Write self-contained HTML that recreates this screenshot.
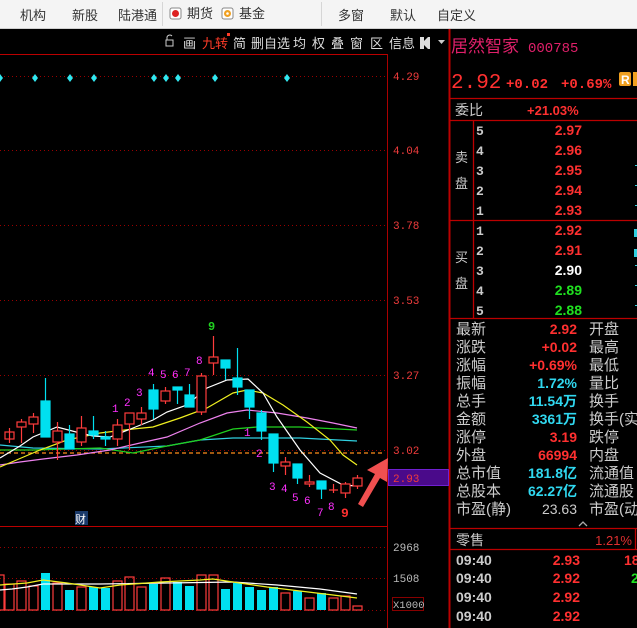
<!DOCTYPE html>
<html><head><meta charset="utf-8"><style>
html,body{margin:0;padding:0;background:#000;width:637px;height:628px;overflow:hidden}
svg{display:block}
text{font-family:"Liberation Sans","Noto Sans CJK SC",sans-serif}
.m{font-family:"Liberation Mono","Noto Sans CJK SC",monospace}
</style></head><body>
<svg width="637" height="628" viewBox="0 0 637 628" xmlns="http://www.w3.org/2000/svg">
<!-- top bar -->
<rect x="0" y="0" width="637" height="28" fill="#f4f4f4"/>
<line x1="0" y1="28.5" x2="637" y2="28.5" stroke="#cfcfcf"/>
<line x1="162.5" y1="2" x2="162.5" y2="26" stroke="#d6d6d6"/>
<line x1="321.5" y1="2" x2="321.5" y2="26" stroke="#d6d6d6"/>
<g font-size="13" fill="#333">
<text x="20" y="20">机构</text><text x="72" y="20">新股</text><text x="118" y="20">陆港通</text>
<text x="187" y="18">期货</text><text x="239" y="18">基金</text>
<text x="338" y="20">多窗</text><text x="390" y="20">默认</text><text x="437" y="20">自定义</text>
</g>
<rect x="170" y="8" width="11" height="11" rx="2" fill="#fff" stroke="#888"/><circle cx="175.5" cy="13.5" r="3.5" fill="#d22"/>
<rect x="222" y="8" width="11" height="11" rx="2" fill="#fff" stroke="#888"/><circle cx="227.5" cy="13.5" r="3.5" fill="#f0a020"/><circle cx="227.5" cy="13.5" r="1.3" fill="#fff"/>

<!-- toolbar -->
<g font-size="13" fill="#ddd">
<rect x="166" y="40" width="7" height="6" fill="none" stroke="#ccc"/><path d="M167 40v-3a3 3 0 0 1 5 -1" fill="none" stroke="#ccc"/>
<text x="183" y="48">画</text>
<text x="202" y="48" fill="#ff3c28">九转</text><rect x="227" y="33" width="3" height="3" fill="#ff3c28"/>
<text x="233" y="48">简</text><text x="251" y="48">删自选</text>
<text x="293" y="48">均</text><text x="312" y="48">权</text><text x="331" y="48">叠</text><text x="350" y="48">窗</text><text x="370" y="48">区</text><text x="389" y="48">信息</text>
<path d="M420 37h4v4l4-4v12l-4-4v4h-4z" fill="#ddd"/><rect x="428" y="37" width="2" height="12" fill="#ddd"/>
<path d="M438 40h7l-3.5 4z" fill="#ccc"/>
</g>
<line x1="0" y1="54.5" x2="387" y2="54.5" stroke="#b00"/>

<!-- frame -->
<line x1="387.5" y1="54" x2="387.5" y2="628" stroke="#a00"/>
<line x1="449.5" y1="29" x2="449.5" y2="628" stroke="#b00" stroke-width="2"/>
<line x1="0" y1="526.5" x2="387" y2="526.5" stroke="#b00"/>

<!-- grid -->
<g stroke="#900" stroke-dasharray="1,3">
<line x1="0" y1="76.5" x2="387" y2="76.5"/><line x1="0" y1="150.5" x2="387" y2="150.5"/><line x1="0" y1="225.5" x2="387" y2="225.5"/><line x1="0" y1="300.5" x2="387" y2="300.5"/><line x1="0" y1="375.5" x2="387" y2="375.5"/><line x1="0" y1="450.5" x2="387" y2="450.5"/>
<line x1="0" y1="547.5" x2="387" y2="547.5"/><line x1="0" y1="578.5" x2="387" y2="578.5"/><line x1="0" y1="610.5" x2="387" y2="610.5"/>
</g>
<g class="m" font-size="11" fill="#f03c3c">
<text x="393" y="80" class="m">4.29</text><text x="393" y="154" class="m">4.04</text><text x="393" y="229" class="m">3.78</text><text x="393" y="304" class="m">3.53</text><text x="393" y="379" class="m">3.27</text><text x="393" y="454" class="m">3.02</text>
</g>
<g class="m" font-size="11" fill="#bbb"><text x="393" y="551" class="m">2968</text><text x="393" y="582" class="m">1508</text></g>
<rect x="392.5" y="597.5" width="31" height="13" fill="none" stroke="#800"/><text x="393" y="608" class="m" font-size="10.5" fill="#bbb">X1000</text>
<rect x="388.5" y="469.5" width="60" height="16" fill="#4a0a8a" stroke="#7020d0"/><text x="393" y="482" class="m" font-size="11" fill="#f03c3c">2.93</text>

<!-- diamonds -->
<g fill="#30e8f0">
<path d="M0 74l3 4-3 4-3-4z"/><path d="M35 74l3 4-3 4-3-4z"/><path d="M70 74l3 4-3 4-3-4z"/><path d="M94 74l3 4-3 4-3-4z"/><path d="M154 74l3 4-3 4-3-4z"/><path d="M166 74l3 4-3 4-3-4z"/><path d="M178 74l3 4-3 4-3-4z"/><path d="M215 74l3 4-3 4-3-4z"/><path d="M287 74l3 4-3 4-3-4z"/>
</g>

<!-- MA lines -->
<line x1="0" y1="453" x2="385" y2="453" stroke="#ff8c1a" stroke-dasharray="4,3" stroke-width="1.2"/>
<polyline fill="none" stroke="#30d0e0" stroke-width="1.2" points="0,445 33,448 100,449 167,446 200,440 233,438 300,438 357,441"/>
<polyline fill="none" stroke="#20d020" stroke-width="1.3" points="0,450 33,450 100,448 133,453 167,446 200,440 233,429 257,427 300,427 357,430"/>
<polyline fill="none" stroke="#ee82ee" stroke-width="1.2" points="0,465 20,462 43,459 77,455 110,450 140,443 167,437 200,423 227,413 247,410 277,413 307,418 333,423 357,428"/>
<polyline fill="none" stroke="#f0f020" stroke-width="1.2" points="0,467 40,450 67,440 100,433 133,429 153,427 180,418 207,408 233,393 247,390 263,393 283,405 307,422 330,440 343,455 357,465"/>
<polyline fill="none" stroke="#fff" stroke-width="1.2" points="0,458 20,446 33,437 57,427 80,433 93,436 110,437 133,428 153,420 167,412 187,405 207,388 227,380 248,379 263,393 277,417 300,450 320,473 343,485 357,486"/>

<!-- candles -->
<g stroke="#ff3c3c" fill="none" stroke-width="1.2">
<line x1="9.5" y1="428" x2="9.5" y2="443"/><rect x="5" y="432" width="9" height="7"/>
<line x1="21.5" y1="419" x2="21.5" y2="443"/><rect x="17" y="422" width="9" height="5" fill="#000"/>
<line x1="33.5" y1="413" x2="33.5" y2="433"/><rect x="29" y="417" width="9" height="7" fill="#000"/>
<line x1="57.5" y1="422" x2="57.5" y2="460"/><rect x="53" y="431" width="9" height="11" fill="#000"/>
<line x1="81.5" y1="416" x2="81.5" y2="446"/><rect x="77" y="428" width="9" height="14" fill="#000"/>
<line x1="117.5" y1="419" x2="117.5" y2="446"/><rect x="113" y="425" width="9" height="14" fill="#000"/>
<line x1="129.5" y1="413" x2="129.5" y2="450"/><rect x="125" y="413" width="9" height="11" fill="#000"/>
<line x1="141.5" y1="407" x2="141.5" y2="425"/><rect x="137" y="413" width="9" height="6" fill="#000"/>
<line x1="165.5" y1="387" x2="165.5" y2="404"/><rect x="161" y="391" width="9" height="10" fill="#000"/>
<line x1="201.5" y1="373" x2="201.5" y2="415"/><rect x="197" y="376" width="9" height="36" fill="#000"/>
<line x1="213.5" y1="336" x2="213.5" y2="375"/><rect x="209" y="357" width="9" height="6" fill="#000"/>
<line x1="285.5" y1="457" x2="285.5" y2="475"/><rect x="281" y="462" width="9" height="4" fill="#000"/>
<line x1="309.5" y1="475" x2="309.5" y2="487"/><rect x="305" y="482" width="9" height="2" fill="#000"/>
<line x1="333.5" y1="484" x2="333.5" y2="493"/><line x1="329" y1="490" x2="338" y2="490"/>
<line x1="345.5" y1="482" x2="345.5" y2="498"/><rect x="341" y="484" width="9" height="9" fill="#000"/>
<line x1="357.5" y1="475" x2="357.5" y2="489"/><rect x="353" y="478" width="9" height="8" fill="#000"/>
</g>
<g fill="#00e0f0" stroke="#00e0f0" stroke-width="1.2">
<line x1="45.5" y1="378" x2="45.5" y2="437"/><rect x="41" y="401" width="9" height="36"/>
<line x1="69.5" y1="425" x2="69.5" y2="449"/><rect x="65" y="434" width="9" height="15"/>
<line x1="93.5" y1="416" x2="93.5" y2="439"/><rect x="89" y="431" width="9" height="4"/>
<line x1="105.5" y1="431" x2="105.5" y2="446"/><rect x="101" y="437" width="9" height="2"/>
<line x1="153.5" y1="384" x2="153.5" y2="419"/><rect x="149" y="390" width="9" height="19"/>
<line x1="177.5" y1="387" x2="177.5" y2="404"/><rect x="173" y="387" width="9" height="3"/>
<line x1="189.5" y1="384" x2="189.5" y2="407"/><rect x="185" y="395" width="9" height="12"/>
<line x1="225.5" y1="360" x2="225.5" y2="380"/><rect x="221" y="360" width="9" height="8"/>
<line x1="237.5" y1="348" x2="237.5" y2="395"/><rect x="233" y="378" width="9" height="9"/>
<line x1="249.5" y1="390" x2="249.5" y2="419"/><rect x="245" y="390" width="9" height="17"/>
<line x1="261.5" y1="410" x2="261.5" y2="440"/><rect x="257" y="413" width="9" height="18"/>
<line x1="273.5" y1="434" x2="273.5" y2="472"/><rect x="269" y="434" width="9" height="29"/>
<line x1="297.5" y1="464" x2="297.5" y2="484"/><rect x="293" y="464" width="9" height="14"/>
<line x1="321.5" y1="481" x2="321.5" y2="499"/><rect x="317" y="481" width="9" height="8"/>
</g>

<!-- nine-turn labels -->
<g font-size="11" fill="#ff30ff" class="m">
<text x="112" y="412" class="m">1</text><text x="124" y="406" class="m">2</text><text x="136" y="396" class="m">3</text><text x="148" y="376" class="m">4</text><text x="160" y="378" class="m">5</text><text x="172" y="378" class="m">6</text><text x="184" y="376" class="m">7</text><text x="196" y="364" class="m">8</text>
<text x="244" y="436" class="m">1</text><text x="256" y="457" class="m">2</text><text x="269" y="490" class="m">3</text><text x="281" y="492" class="m">4</text><text x="292" y="501" class="m">5</text><text x="304" y="504" class="m">6</text><text x="317" y="516" class="m">7</text><text x="328" y="510" class="m">8</text>
</g>
<text x="208" y="330" class="m" font-size="12" font-weight="bold" fill="#20d020">9</text>
<text x="341" y="517" class="m" font-size="13" font-weight="bold" fill="#ff3030">9</text>
<rect x="75" y="511" width="13" height="14" fill="#1a3a6a"/><text x="75" y="523" font-size="11" fill="#fff">财</text>

<!-- arrow -->
<path d="M358 504 L375 474 L367 470 L388 458 L387 482 L380 478 L363 507 Z" fill="#f05050"/>

<!-- volume -->
<g fill="none" stroke="#ff3c3c" stroke-width="1.2">
<rect x="-5" y="575" width="9" height="35"/>
<rect x="5" y="584" width="9" height="26"/><rect x="17" y="581" width="9" height="29"/><rect x="29" y="586" width="9" height="24"/>
<rect x="53" y="583" width="9" height="27"/><rect x="77" y="587" width="9" height="23"/><rect x="113" y="581" width="9" height="29"/><rect x="125" y="577" width="9" height="33"/><rect x="137" y="587" width="9" height="23"/>
<rect x="161" y="578" width="9" height="32"/><rect x="197" y="575" width="9" height="35"/><rect x="209" y="575" width="9" height="35"/>
<rect x="281" y="593" width="9" height="17"/><rect x="305" y="598" width="9" height="12"/><rect x="329" y="598" width="9" height="12"/><rect x="341" y="596" width="9" height="14"/><rect x="353" y="606" width="9" height="4"/>
</g>
<g fill="#00e0f0">
<rect x="41" y="573" width="9" height="37"/><rect x="65" y="590" width="9" height="20"/><rect x="89" y="587" width="9" height="23"/><rect x="101" y="588" width="9" height="22"/>
<rect x="149" y="584" width="9" height="26"/><rect x="173" y="582" width="9" height="28"/><rect x="185" y="586" width="9" height="24"/>
<rect x="221" y="589" width="9" height="21"/><rect x="233" y="583" width="9" height="27"/><rect x="245" y="587" width="9" height="23"/><rect x="257" y="590" width="9" height="20"/><rect x="269" y="587" width="9" height="23"/><rect x="293" y="591" width="9" height="19"/><rect x="317" y="593" width="9" height="17"/>
</g>
<polyline fill="none" stroke="#fff" stroke-width="1.2" points="0,590 12,589 27,587 43,584 100,584 233,582 277,585 320,589 357,594"/>
<polyline fill="none" stroke="#f0f020" stroke-width="1.2" points="0,585 27,583 43,580 67,583 100,588 120,585 160,582 200,580 213,579 233,582 267,587 300,591 333,595 357,598"/>

<!-- right panel -->
<text x="451" y="52" font-size="17" fill="#e0206a">居然智家</text>
<text x="528" y="52" font-size="14" fill="#e0206a" class="m">000785</text>
<text x="451" y="88" font-size="21" fill="#ff3030" class="m">2.92</text>
<text x="506" y="88" font-size="14" fill="#ff3030" class="m" font-weight="bold">+0.02</text>
<text x="561" y="88" font-size="14" fill="#ff3030" class="m" font-weight="bold">+0.69%</text>
<rect x="619" y="72" width="12" height="14" rx="2" fill="#f0a020"/><text x="621" y="84" font-size="12" fill="#fff" font-weight="bold">R</text><rect x="633" y="72" width="4" height="14" fill="#f0a020"/>
<g stroke="#b00" stroke-width="1.3">
<line x1="449" y1="98.5" x2="637" y2="98.5"/><line x1="449" y1="120.5" x2="637" y2="120.5"/><line x1="449" y1="220.5" x2="637" y2="220.5"/><line x1="449" y1="318.5" x2="637" y2="318.5"/>
<line x1="473.5" y1="120" x2="473.5" y2="318"/>
<line x1="449" y1="528.5" x2="637" y2="528.5"/><line x1="449" y1="549.5" x2="637" y2="549.5"/><line x1="635.5" y1="528" x2="635.5" y2="549"/>
</g>
<g font-size="14" fill="#ccc"><text x="455" y="115">委比</text></g>
<text x="527" y="115" font-size="13" fill="#ff3030" font-weight="bold">+21.03%</text>
<g font-size="13" fill="#ccc"><text x="455" y="162">卖</text><text x="455" y="188">盘</text><text x="455" y="262">买</text><text x="455" y="288">盘</text></g>
<g font-size="13" font-weight="bold" fill="#ccc" class="m">
<text x="476" y="135" class="m">5</text><text x="476" y="155" class="m">4</text><text x="476" y="175" class="m">3</text><text x="476" y="195" class="m">2</text><text x="476" y="215" class="m">1</text>
<text x="476" y="235" class="m">1</text><text x="476" y="255" class="m">2</text><text x="476" y="275" class="m">3</text><text x="476" y="295" class="m">4</text><text x="476" y="315" class="m">5</text>
</g>
<g font-size="14" font-weight="bold" text-anchor="end">
<text x="582" y="135" fill="#ff3030">2.97</text><text x="582" y="155" fill="#ff3030">2.96</text><text x="582" y="175" fill="#ff3030">2.95</text><text x="582" y="195" fill="#ff3030">2.94</text><text x="582" y="215" fill="#ff3030">2.93</text>
<text x="582" y="235" fill="#ff3030">2.92</text><text x="582" y="255" fill="#ff3030">2.91</text><text x="582" y="275" fill="#fff">2.90</text><text x="582" y="295" fill="#20e020">2.89</text><text x="582" y="315" fill="#20e020">2.88</text>
</g>
<g fill="#30d0e0"><rect x="635" y="165" width="2" height="1"/><rect x="635" y="185" width="2" height="1"/><rect x="635" y="205" width="2" height="1"/><rect x="634" y="229" width="3" height="8"/><rect x="634" y="249" width="3" height="8"/><rect x="635" y="265" width="2" height="1"/><rect x="635" y="285" width="2" height="1"/><rect x="635" y="305" width="2" height="1"/></g>

<g font-size="15" fill="#ccc">
<text x="456" y="334">最新</text><text x="456" y="352">涨跌</text><text x="456" y="370">涨幅</text><text x="456" y="388">振幅</text><text x="456" y="406">总手</text><text x="456" y="424">金额</text><text x="456" y="442">涨停</text><text x="456" y="460">外盘</text><text x="456" y="478">总市值</text><text x="456" y="496">总股本</text><text x="456" y="514">市盈(静)</text>
<text x="589" y="334">开盘</text><text x="589" y="352">最高</text><text x="589" y="370">最低</text><text x="589" y="388">量比</text><text x="589" y="406">换手</text><text x="589" y="424">换手(实</text><text x="589" y="442">跌停</text><text x="589" y="460">内盘</text><text x="589" y="478">流通值</text><text x="589" y="496">流通股</text><text x="589" y="514">市盈(动</text>
</g>
<g font-size="14" font-weight="bold" text-anchor="end">
<text x="577" y="334" fill="#ff3030">2.92</text><text x="577" y="352" fill="#ff3030">+0.02</text><text x="577" y="370" fill="#ff3030">+0.69%</text><text x="577" y="388" fill="#30d8f0">1.72%</text>
<text x="577" y="406" fill="#30d8f0">11.54万</text><text x="577" y="424" fill="#30d8f0">3361万</text><text x="577" y="442" fill="#ff3030">3.19</text><text x="577" y="460" fill="#ff3030">66994</text>
<text x="577" y="478" fill="#30d8f0">181.8亿</text><text x="577" y="496" fill="#30d8f0">62.27亿</text><text x="577" y="514" fill="#ccc" font-weight="normal">23.63</text>
</g>
<path d="M579 526l4-4 4 4" fill="none" stroke="#aaa" stroke-width="1.3"/>
<text x="456" y="545" font-size="14" fill="#ccc">零售</text>
<text x="632" y="545" font-size="13" fill="#e03030" text-anchor="end">1.21%</text>
<g font-size="14" font-weight="bold" fill="#ccc">
<text x="456" y="565">09:40</text><text x="456" y="583">09:40</text><text x="456" y="602">09:40</text><text x="456" y="621">09:40</text>
</g>
<g font-size="14" font-weight="bold" fill="#ff3030" text-anchor="end">
<text x="580" y="565">2.93</text><text x="580" y="583">2.92</text><text x="580" y="602">2.92</text><text x="580" y="621">2.92</text>
</g>
<text x="624" y="565" font-size="14" font-weight="bold" fill="#ff3030">18</text>
<text x="631" y="583" font-size="14" font-weight="bold" fill="#20e020">2</text>
</svg>
</body></html>
